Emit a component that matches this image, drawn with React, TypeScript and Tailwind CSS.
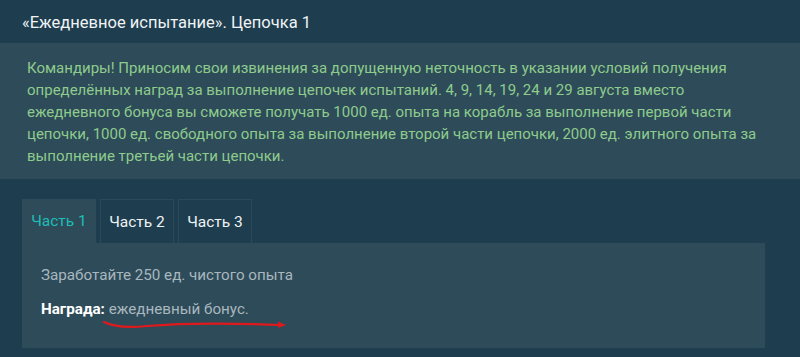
const tabs = ["Часть 1", "Часть 2", "Часть 3"];

export default function App() {
  return (
    <div className="w-[800px] h-[357px] bg-[#1e3d4f] font-['Roboto',sans-serif] overflow-hidden">
      <div className="h-[43px] flex items-center pt-[3px] px-[22px] text-[16.5px] text-[#f0f4f5]">
        «Ежедневное испытание». Цепочка 1
      </div>
      <div className="bg-[#2d4b59] h-[136px] px-[27px] pt-[14px] text-[15px] leading-[22px] text-[#8fcb8c]">
        Командиры! Приносим свои извинения за допущенную неточность в указании условий получения
        определённых наград за выполнение цепочек испытаний. 4, 9, 14, 19, 24 и 29 августа вместо
        ежедневного бонуса вы сможете получать 1000 ед. опыта на корабль за выполнение первой части
        цепочки, 1000 ед. свободного опыта за выполнение второй части цепочки, 2000 ед. элитного опыта за
        выполнение третьей части цепочки.
      </div>
      <div className="pt-[20px] pl-[22px] pr-[35px]">
        <div className="flex gap-[4px]">
          {tabs.map((t, i) => (
            <div
              key={t}
              className={
                i === 0
                  ? "w-[74px] h-[44px] flex items-center justify-center pt-[2px] bg-[#2d4b59] text-[15.5px] text-[#1fbdb6]"
                  : "w-[74px] h-[44px] flex items-center justify-center pt-[2px] border border-b-0 border-[#2b4a58] text-[15.5px] text-[#eef3f4]"
              }
            >
              {t}
            </div>
          ))}
        </div>
        <div className="bg-[#2d4b59] h-[105px] px-[19px] pt-[21px] text-[15.2px] text-[#a9b7be] relative">
          <div className="leading-[22px]">Заработайте 250 ед. чистого опыта</div>
          <div className="leading-[22px] mt-[12px]">
            <span className="font-bold text-white">Награда:</span> ежедневный бонус.
          </div>
          <svg className="absolute left-[80px] top-[76px]" width="190" height="14" viewBox="0 0 190 14">
            <path
              d="M2 3 C 10 7, 25 9, 45 7 C 80 4, 130 4, 180 6"
              fill="none"
              stroke="#e0191c"
              strokeWidth="2.2"
              strokeLinecap="round"
            />
            <path d="M176 3.5 L182 6 L176 8" fill="none" stroke="#e0191c" strokeWidth="1.5" />
          </svg>
        </div>
      </div>
    </div>
  );
}
